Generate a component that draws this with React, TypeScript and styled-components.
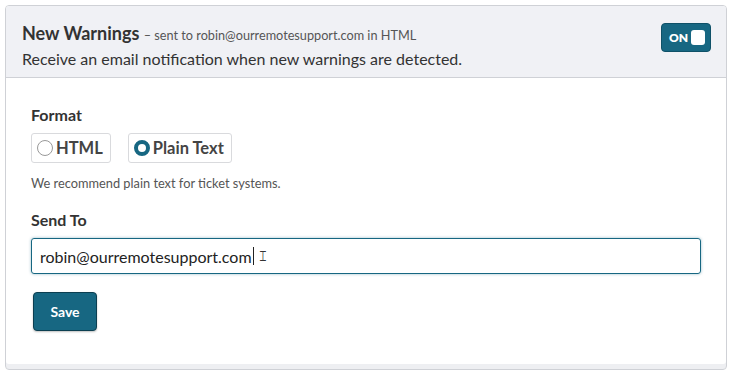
import styled, { createGlobalStyle } from "styled-components";

const GlobalStyle = createGlobalStyle`
  body {
    margin: 0;
    padding: 5px;
    background: #ffffff;
    font-family: Lato, "Open Sans", sans-serif;
    color: #333;
  }
`;

const Card = styled.section`
  width: 722px;
  box-sizing: border-box;
  border: 1px solid #cfd1d6;
  border-radius: 4px;
  background: #fff;
  box-shadow: inset 0 -5px 0 #eeeff2;
  overflow: hidden;
`;

const Header = styled.header`
  display: flex;
  justify-content: space-between;
  align-items: flex-start;
  height: 72px;
  box-sizing: border-box;
  padding: 14px 15px 0 16px;
  background: #f0f1f5;
  border-bottom: 1px solid #cfd1d6;
`;

const HeaderText = styled.div`
  display: flex;
  flex-direction: column;
`;

const Title = styled.h2`
  margin: 0;
  font-size: 18px;
  font-weight: 700;
  line-height: 26px;
  color: #333;
`;

const SentTo = styled.span`
  font-size: 12.7px;
  font-weight: 400;
  color: #555;
`;

const Description = styled.p`
  margin: 0;
  font-size: 16px;
  line-height: 22px;
  color: #333;
`;

const Toggle = styled.button`
  margin-top: 3px;
  display: flex;
  align-items: center;
  justify-content: space-between;
  width: 50px;
  height: 29px;
  padding: 0 5px 0 7px;
  border: 1px solid #0f5168;
  border-radius: 4px;
  background: #176782;
  color: #fff;
  font-family: inherit;
  font-size: 12px;
  font-weight: 800;
`;

const Knob = styled.span`
  width: 14px;
  height: 15px;
  border-radius: 3px;
  background: #fff;
`;

const Body = styled.div`
  padding: 26px 25px 38px 25px;
  display: flex;
  flex-direction: column;
`;

const Label = styled.div`
  font-size: 16px;
  font-weight: 700;
  line-height: 22px;
  color: #333;
`;

const RadioRow = styled.div`
  display: flex;
  gap: 17px;
  margin-top: 7px;
`;

const RadioOption = styled.label`
  display: flex;
  align-items: center;
  gap: 3px;
  height: 30px;
  box-sizing: border-box;
  padding: 0 7px 0 5px;
  border: 1px solid #d9dadd;
  border-radius: 3px;
  font-size: 16.5px;
  font-weight: 700;
  color: #444;
`;

const RadioDot = styled.span<{ $checked: boolean }>`
  width: 16px;
  height: 16px;
  box-sizing: border-box;
  border-radius: 50%;
  border: ${(p) => (p.$checked ? "4px solid #176782" : "1px solid #999")};
  background: #fff;
`;

const Help = styled.p`
  margin: 12px 0 0;
  font-size: 12.8px;
  line-height: 17px;
  color: #555;
`;

const SendLabel = styled(Label)`
  margin-top: 17px;
`;

const Input = styled.div`
  margin-top: 7px;
  height: 36px;
  box-sizing: border-box;
  display: flex;
  align-items: center;
  padding: 0 8px;
  border: 1px solid #176782;
  border-radius: 3px;
  box-shadow: 0 0 3px rgba(23, 103, 130, 0.45);
  font-size: 16px;
  color: #222;
`;

const Caret = styled.span`
  display: inline-block;
  width: 1px;
  height: 18px;
  background: #222;
  margin-left: 1px;
`;

const Beam = styled.span`
  margin-left: 4px;
  font-size: 14px;
  color: #333;
`;

const SaveButton = styled.button`
  align-self: flex-start;
  margin: 18px 0 0 2px;
  width: 64px;
  height: 39px;
  border: 1px solid #0c3f51;
  border-radius: 4px;
  background: #176782;
  color: #fff;
  font-family: inherit;
  font-size: 14px;
  font-weight: 700;
  box-shadow: 0 1px 2px rgba(0, 0, 0, 0.25);
`;

export default function App() {
  return (
    <>
      <GlobalStyle />
      <Card>
        <Header>
          <HeaderText>
            <Title>
              New Warnings <SentTo>– sent to robin@ourremotesupport.com in HTML</SentTo>
            </Title>
            <Description>Receive an email notification when new warnings are detected.</Description>
          </HeaderText>
          <Toggle>
            ON
            <Knob />
          </Toggle>
        </Header>
        <Body>
          <Label>Format</Label>
          <RadioRow>
            <RadioOption>
              <RadioDot $checked={false} />
              HTML
            </RadioOption>
            <RadioOption>
              <RadioDot $checked={true} />
              Plain Text
            </RadioOption>
          </RadioRow>
          <Help>We recommend plain text for ticket systems.</Help>
          <SendLabel>Send To</SendLabel>
          <Input>
            robin@ourremotesupport.com
            <Caret />
            <Beam>𝙸</Beam>
          </Input>
          <SaveButton>Save</SaveButton>
        </Body>
      </Card>
    </>
  );
}
